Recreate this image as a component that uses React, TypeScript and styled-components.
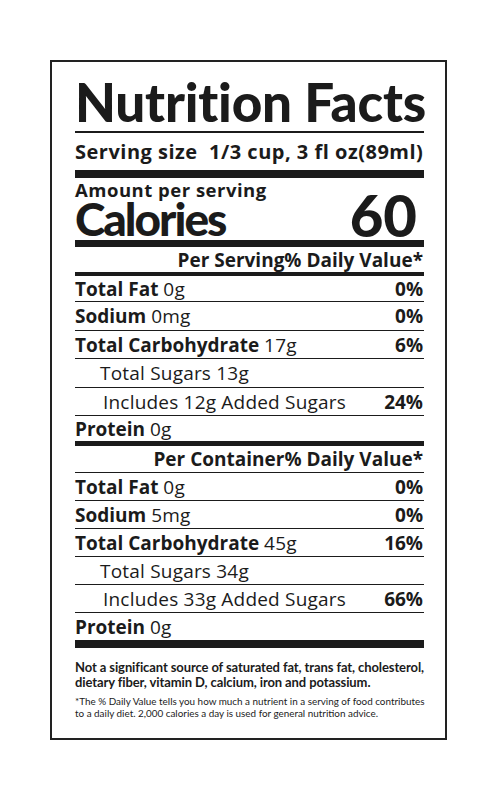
import React from "react";
import styled, { createGlobalStyle } from "styled-components";

const Global = createGlobalStyle`
  html, body { margin: 0; padding: 0; background: #ffffff; }
  body { font-family: "Lato", "Liberation Sans", sans-serif; color: #1b1b1b; }
`;

const Page = styled.div`
  padding: 60px 0 0 50px;
`;

const Label = styled.div`
  box-sizing: border-box;
  width: 397px;
  height: 680px;
  border: 2px solid #222;
  padding: 0 21px 0 23px;
  display: flex;
  flex-direction: column;
`;

const Title = styled.h1`
  box-sizing: border-box;
  margin: 0;
  height: 69px;
  padding-top: 10px;
  font-size: 53px;
  font-weight: 900;
  line-height: 59px;
  letter-spacing: -0.2px;
  white-space: nowrap;
`;

const Rule = styled.div<{ $h: number }>`
  height: ${(p) => p.$h}px;
  background: #1b1b1b;
  flex-shrink: 0;
`;

const Serving = styled.div`
  height: 37px;
  display: flex;
  align-items: center;
  font-family: "Open Sans", "Lato", sans-serif;
  font-size: 20px;
  font-weight: 700;
  white-space: nowrap;
  letter-spacing: 0.5px;
`;

const CalBlock = styled.div`
  height: 62px;
  display: flex;
  justify-content: space-between;
  align-items: flex-end;
`;

const CalLeft = styled.div`
  display: flex;
  flex-direction: column;
`;

const Amount = styled.div`
  padding-top: 3px;
  font-family: "Open Sans", "Lato", sans-serif;
  font-size: 18.5px;
  font-weight: 700;
  line-height: 18px;
  letter-spacing: 0.5px;
`;

const Calories = styled.div`
  font-size: 46px;
  font-weight: 900;
  line-height: 40px;
  letter-spacing: -2px;
  padding-bottom: 1px;
`;

const CalNum = styled.div`
  font-size: 58px;
  font-weight: 900;
  line-height: 48px;
  padding-right: 7px;
  padding-bottom: 1px;
`;

const DVHeader = styled.div<{ $h: number }>`
  height: ${(p) => p.$h}px;
  display: flex;
  align-items: center;
  justify-content: flex-end;
  font-family: "Open Sans", "Lato", sans-serif;
  font-size: 19px;
  font-weight: 700;
  white-space: nowrap;
  padding-right: 1px;
`;

const Row = styled.div<{ $h: number; $indent?: number }>`
  height: ${(p) => p.$h}px;
  display: flex;
  align-items: center;
  justify-content: space-between;
  padding-left: ${(p) => p.$indent ?? 0}px;
  font-family: "Open Sans", "Lato", sans-serif;
  font-size: 19px;
  white-space: nowrap;
`;

const Name = styled.span`
  font-weight: 700;
`;

const Amt = styled.span`
  font-weight: 400;
  letter-spacing: 0.2px;
`;

const Pct = styled.span`
  font-weight: 700;
  padding-right: 1px;
`;

const Footer = styled.div`
  padding-top: 12px;
  display: flex;
  flex-direction: column;
  gap: 6px;
  white-space: nowrap;
`;

const Note = styled.p`
  margin: 0;
  font-size: 13px;
  line-height: 15px;
  font-weight: 700;
  letter-spacing: -0.1px;
`;

const Fine = styled.p`
  margin: 0;
  font-size: 9.9px;
  line-height: 11.5px;
  font-weight: 400;
`;

type Item = { name?: string; amt: string; pct?: string; indent?: number };

const perServing: Item[] = [
  { name: "Total Fat", amt: "0g", pct: "0%" },
  { name: "Sodium", amt: "0mg", pct: "0%" },
  { name: "Total Carbohydrate", amt: "17g", pct: "6%" },
  { amt: "Total Sugars 13g", indent: 25 },
  { amt: "Includes 12g Added Sugars", pct: "24%", indent: 28 },
  { name: "Protein", amt: "0g" },
];

const perContainer: Item[] = [
  { name: "Total Fat", amt: "0g", pct: "0%" },
  { name: "Sodium", amt: "5mg", pct: "0%" },
  { name: "Total Carbohydrate", amt: "45g", pct: "16%" },
  { amt: "Total Sugars 34g", indent: 25 },
  { amt: "Includes 33g Added Sugars", pct: "66%", indent: 28 },
  { name: "Protein", amt: "0g" },
];

const Rows: React.FC<{ items: Item[]; heights: number[] }> = ({ items, heights }) => (
  <>
    {items.map((it, i) => (
      <React.Fragment key={i}>
        <Row $h={heights[i]} $indent={it.indent}>
          <span>
            {it.name && <Name>{it.name} </Name>}
            <Amt>{it.amt}</Amt>
          </span>
          {it.pct && <Pct>{it.pct}</Pct>}
        </Row>
        {i < items.length - 1 && <Rule $h={1} />}
      </React.Fragment>
    ))}
  </>
);

export default function App() {
  return (
    <Page>
      <Global />
      <Label>
        <Title>Nutrition Facts</Title>
        <Rule $h={2} />
        <Serving>Serving size&nbsp;&nbsp;1/3 cup, 3 fl oz(89ml)</Serving>
        <Rule $h={8} />
        <CalBlock>
          <CalLeft>
            <Amount>Amount per serving</Amount>
            <Calories>Calories</Calories>
          </CalLeft>
          <CalNum>60</CalNum>
        </CalBlock>
        <Rule $h={7} />
        <DVHeader $h={25}>Per Serving% Daily Value*</DVHeader>
        <Rule $h={4} />
        <Rows items={perServing} heights={[25, 28, 27, 28, 27, 25]} />
        <Rule $h={5} />
        <DVHeader $h={26}>Per Container% Daily Value*</DVHeader>
        <Rule $h={1} />
        <Rows items={perContainer} heights={[27, 27, 27, 27, 27, 27]} />
        <Rule $h={8} />
        <Footer>
          <Note>
            Not a significant source of saturated fat, trans fat, cholesterol,
            <br />
            dietary fiber, vitamin D, calcium, iron and potassium.
          </Note>
          <Fine>
            *The % Daily Value tells you how much a nutrient in a serving of food contributes
            <br />
            to a daily diet. 2,000 calories a day is used for general nutrition advice.
          </Fine>
        </Footer>
      </Label>
    </Page>
  );
}
